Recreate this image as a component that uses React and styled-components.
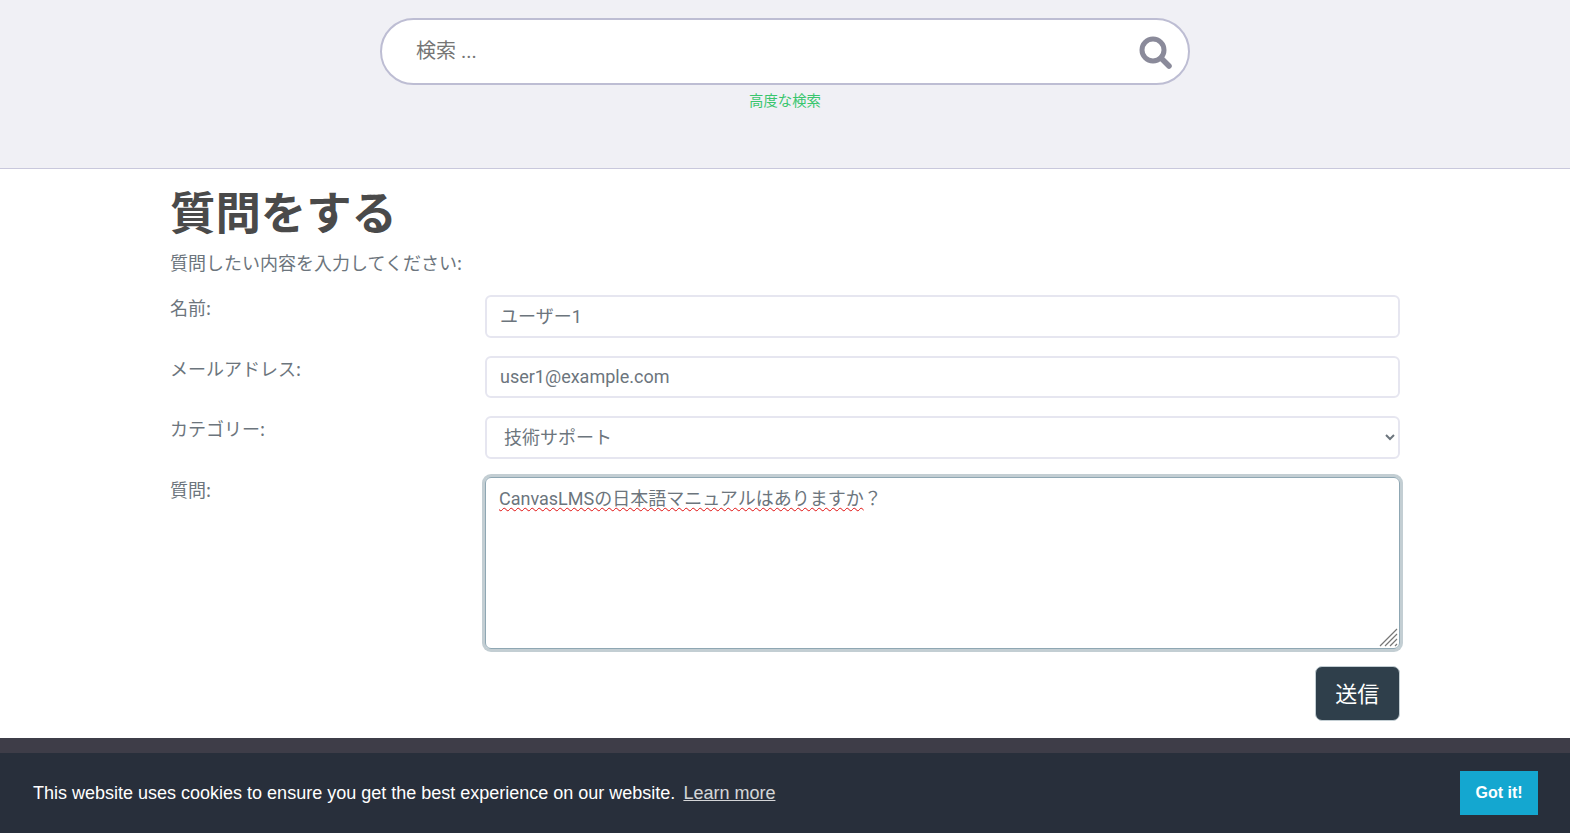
import React from "react";
import styled, { createGlobalStyle } from "styled-components";

const Global = createGlobalStyle`
  html, body { margin: 0; padding: 0; height: 100%; overflow: hidden; background: #fff; }
  body { font-family: Roboto, "Noto Sans CJK JP", sans-serif; color: #6c757d; }
  * { box-sizing: border-box; }
`;
const Page = styled.div`
  position: relative;
  height: 833px;
  display: flex;
  flex-direction: column;
  overflow: hidden;
`;
const SearchHeader = styled.header`
  height: 169px;
  flex: none;
  background: #f0f0f5;
  border-bottom: 1px solid #c9c8dc;
  padding-top: 18px;
  display: flex;
  flex-direction: column;
  align-items: center;
`;
const SearchBar = styled.div`
  width: 810px;
  height: 67px;
  background: #fff;
  border: 2px solid #bdbdd3;
  border-radius: 34px;
  display: flex;
  align-items: center;
  justify-content: space-between;
  padding: 0 16px 0 34px;
`;
const SearchInput = styled.input`
  flex: 1;
  border: 0;
  outline: 0;
  padding: 0 0 2px;
  background: transparent;
  font: 400 20px Roboto, "Noto Sans CJK JP", sans-serif;
  color: #6c757d;
  &::placeholder { color: #757575; opacity: 1; }
`;
const AdvancedLink = styled.a`
  margin-top: 6px;
  font: 400 14.4px/18px "Noto Sans CJK JP", sans-serif;
  color: #39c66d;
  text-decoration: none;
`;
const Main = styled.main`
  width: 1260px;
  margin: 0 auto;
  padding: 0 15px;
  flex: 1;
`;
const Title = styled.h1`
  margin: 15px 0 0;
  font: 700 45.4px/52px "Noto Sans CJK JP", sans-serif;
  color: #4a4a4a;
`;
const Lead = styled.p`
  margin: 13px 0 0;
  font: 400 18px/26px "Noto Sans CJK JP", sans-serif;
  color: #6c757d;
`;
const Form = styled.form`
  margin-top: 20px;
  display: grid;
  grid-template-columns: 315px 914.5px;
  row-gap: 18px;
`;
const Label = styled.label`
  margin-top: -1px;
  font: 400 18px/26px "Noto Sans CJK JP", sans-serif;
  color: #6c757d;
`;
const TextField = styled.input`
  width: 100%;
  height: 42.7px;
  border: 2px solid #e6e6f0;
  border-radius: 6px;
  padding: 0 13px 2px;
  background: #fff;
  font: 400 18px Roboto, "Noto Sans CJK JP", sans-serif;
  color: #6c757d;
  outline: 0;
`;
const SelectField = styled.select`
  width: 100%;
  height: 42.7px;
  border: 2px solid #e6e6f0;
  border-radius: 6px;
  padding: 0 10px 0 13px;
  background: #fff;
  font: 400 18px Roboto, "Noto Sans CJK JP", sans-serif;
  color: #6c757d;
  outline: 0;
`;
const QuestionBox = styled.div`
  position: relative;
  width: 100%;
  height: 172px;
  border: 1px solid #8fa7b3;
  border-radius: 6px;
  padding: 7px 13px;
  box-shadow: 0 0 0 3px #c3ced3;
  font: 400 18px/28px Roboto, "Noto Sans CJK JP", sans-serif;
  color: #6c757d;
`;
const Misspelled = styled.span`
  text-decoration: underline wavy #e01010 1px;
  text-underline-offset: 2px;
`;
const ResizeHandle = styled.svg`
  position: absolute;
  right: 1px;
  bottom: 1px;
  width: 19px;
  height: 19px;
`;
const Actions = styled.div`
  grid-column: 2;
  display: flex;
  justify-content: flex-end;
  margin-top: -1px;
`;
const SubmitButton = styled.button`
  height: 54.5px;
  width: 84.5px;
  background: #2f3f4b;
  color: #fff;
  border: 1px solid #c3ced3;
  border-radius: 7px;
  padding-bottom: 3px;
  font: 400 22px "Noto Sans CJK JP", sans-serif;
`;
const Footer = styled.footer`
  height: 95px;
  flex: none;
  background: #3e3d48;
`;
const CookieBar = styled.div`
  position: absolute;
  left: 0;
  right: 0;
  bottom: 0;
  height: 80px;
  background: #282f3b;
  color: #fff;
  display: flex;
  align-items: center;
  justify-content: space-between;
  padding: 0 32px 0 33px;
  font: 400 18px/27px "Liberation Sans", Arial, sans-serif;
`;
const CookieText = styled.span`
  letter-spacing: 0;
`;
const CookieLink = styled.a`
  margin-left: 8px;
  color: #fff;
  opacity: .8;
  text-decoration: underline;
`;
const GotIt = styled.button`
  width: 78px;
  height: 44px;
  border: 0;
  background: #14a7d0;
  color: #fff;
  font: 700 16px "Liberation Sans", Arial, sans-serif;
`;
const Icon = styled.svg`
  width: 34px;
  height: 34px;
  flex: none;
`;

export default function App() {
  return (
    <Page>
      <Global />
      <SearchHeader>
        <SearchBar>
          <SearchInput placeholder="検索 ..." />
          <Icon viewBox="0 0 34 34" fill="none" stroke="#8a8a9a">
            <circle cx="15" cy="15" r="11" strokeWidth="5" />
            <path d="M23 23l8 8" strokeWidth="5.5" strokeLinecap="round" />
          </Icon>
        </SearchBar>
        <AdvancedLink href="#">高度な検索</AdvancedLink>
      </SearchHeader>
      <Main>
        <Title>質問をする</Title>
        <Lead>質問したい内容を入力してください:</Lead>
        <Form>
          <Label>名前:</Label>
          <TextField defaultValue="ユーザー1" />
          <Label>メールアドレス:</Label>
          <TextField defaultValue="user1@example.com" />
          <Label>カテゴリー:</Label>
          <SelectField defaultValue="技術サポート">
            <option>技術サポート</option>
          </SelectField>
          <Label>質問:</Label>
          <QuestionBox>
            <Misspelled>CanvasLMSの日本語マニュアルはありますか</Misspelled>？
            <ResizeHandle viewBox="0 0 19 19" stroke="#777" strokeWidth="1.2" fill="none">
              <path d="M1 18L18 1M6 18L18 6M11 18l7-7M16 18l2-2" />
            </ResizeHandle>
          </QuestionBox>
          <Actions>
            <SubmitButton type="button">送信</SubmitButton>
          </Actions>
        </Form>
      </Main>
      <Footer />
      <CookieBar>
        <CookieText>
          This website uses cookies to ensure you get the best experience on our website.
          <CookieLink href="#">Learn more</CookieLink>
        </CookieText>
        <GotIt>Got it!</GotIt>
      </CookieBar>
    </Page>
  );
}
